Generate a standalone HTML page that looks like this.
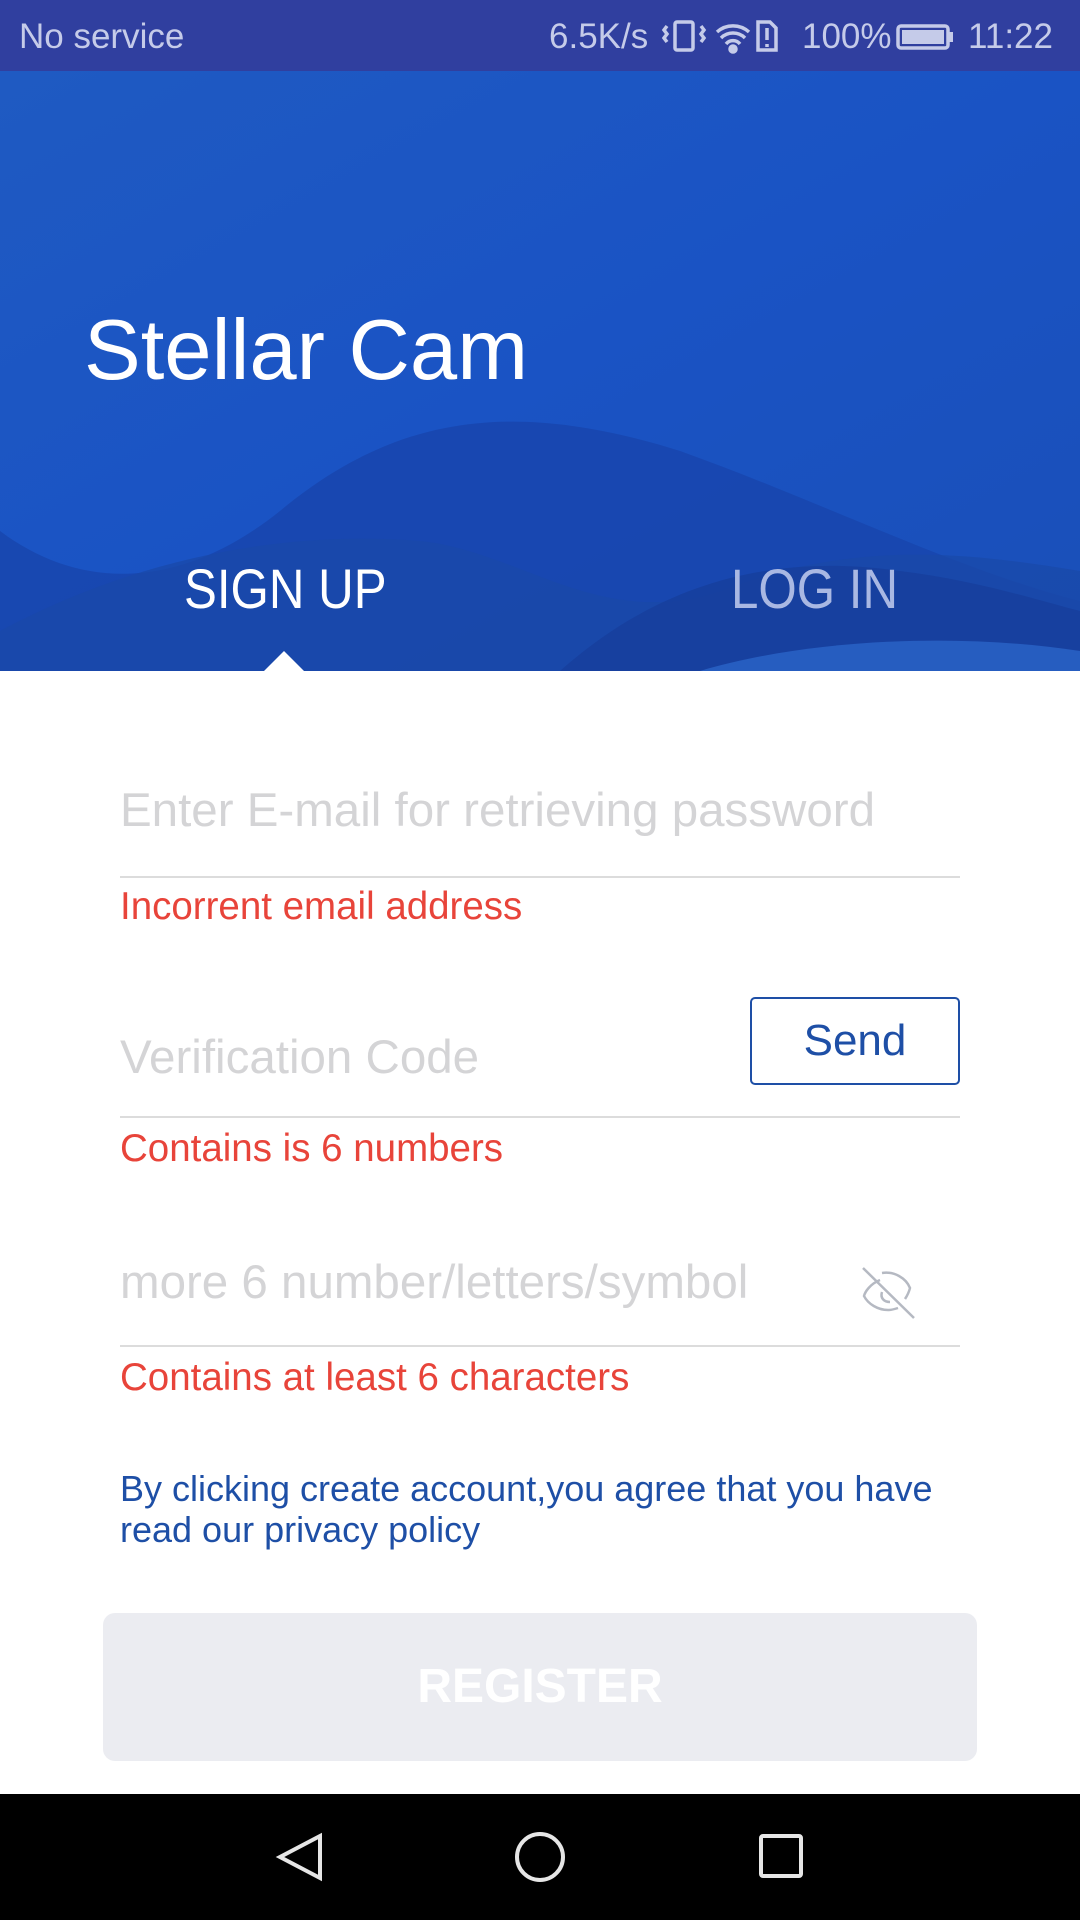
<!DOCTYPE html>
<html><head><meta charset="utf-8"><style>
body{margin:0;width:1080px;height:1920px;position:relative;overflow:hidden;background:#fff;font-family:"Liberation Sans",sans-serif}
.a{position:absolute;white-space:nowrap}
.ph{color:#d4d4d6;font-size:47.5px}
.err{color:#e8443a;font-size:38.5px}
.line{position:absolute;left:120px;width:840px;height:2px;background:#dcdcdc}
</style></head><body>
<div class="a" style="left:0;top:0;width:1080px;height:71px;background:#303f9f"></div>
<div class="a" style="left:19px;top:17px;color:#c5cbe9;font-size:35px">No service</div>
<div class="a" style="left:549px;top:17px;color:#c5cbe9;font-size:35px">6.5K/s</div>
<svg class="a" style="left:660px;top:18px" width="420" height="40" viewBox="0 0 420 40" fill="none" stroke="#c5cbe9" stroke-width="3.5">
<rect x="15" y="4" width="18" height="28" rx="2"/><path d="M7 8l-3 4 3 4-3 4 3 4M41 8l3 4-3 4 3 4-3 4"/>
<path d="M57 14a24 24 0 0 1 32 0M61 20a17 17 0 0 1 24 0M66 26a9 9 0 0 1 14 0"/><circle cx="73" cy="31" r="3" fill="#c5cbe9"/>
<path d="M98 4h12l6 6v22h-18z"/><path d="M107 10v12M107 26v3"/>
<rect x="238" y="8" width="50" height="22" rx="3"/><rect x="242" y="12" width="42" height="14" fill="#c5cbe9" stroke="none"/><rect x="289" y="14" width="4" height="10" fill="#c5cbe9" stroke="none"/>
</svg>
<div class="a" style="left:802px;top:17px;color:#c5cbe9;font-size:35px">100%</div>
<div class="a" style="left:968px;top:17px;color:#c5cbe9;font-size:35px">11:22</div>
<svg class="a" style="left:0;top:71px" width="1080" height="600" viewBox="0 0 1080 600">
<defs><linearGradient id="g" x1="0" y1="0" x2="1" y2="1"><stop offset="0" stop-color="#1f5ac2"/><stop offset="0.5" stop-color="#1a53c4"/><stop offset="1" stop-color="#1a4fb8"/></linearGradient></defs>
<rect width="1080" height="600" fill="url(#g)"/>
<path d="M0 460C80 520 180 520 280 440C400 340 520 330 680 380C820 430 960 500 1080 530V600H0Z" fill="#1845ad" opacity="0.8"/>
<path d="M0 560C150 480 300 460 420 470C520 480 600 560 720 520C850 470 960 480 1080 500V600H0Z" fill="#1a49a8" opacity="0.7"/>
<path d="M560 600C650 520 760 480 900 500C980 510 1040 530 1080 540V600Z" fill="#163f9c" opacity="0.8"/>
<path d="M700 600C800 570 950 560 1080 580V600Z" fill="#2a64c8" opacity="0.8"/>
<path d="M264 600L284 580L304 600Z" fill="#fff"/>
</svg>
<div class="a" style="left:84px;top:302px;color:#fff;font-size:85px">Stellar Cam</div>
<div class="a" style="left:184px;top:556px;color:#fff;font-size:56px;transform:scaleX(0.88);transform-origin:left">SIGN UP</div>
<div class="a" style="left:731px;top:556px;color:#a9b8e3;font-size:56px;transform:scaleX(0.88);transform-origin:left">LOG IN</div>

<div class="a ph" style="left:120px;top:783px">Enter E-mail for retrieving password</div>
<div class="line" style="top:876px"></div>
<div class="a err" style="left:120px;top:885px">Incorrent email address</div>

<div class="a ph" style="left:120px;top:1030px">Verification Code</div>
<div class="a" style="left:750px;top:997px;width:206px;height:84px;border:2.5px solid #1e4fa6;border-radius:5px;color:#1e4fa6;font-size:44px;text-align:center;line-height:84px">Send</div>
<div class="line" style="top:1116px"></div>
<div class="a err" style="left:120px;top:1127px">Contains is 6 numbers</div>

<div class="a ph" style="left:120px;top:1255px">more 6 number/letters/symbol</div>
<svg class="a" style="left:860px;top:1266px" width="56" height="56" viewBox="0 0 56 56" fill="none" stroke="#b5b9c2" stroke-width="2.5">
<path d="M3 2L54 52"/><path d="M20 14C10 18 5 26 4 30C8 38 18 44 28 44C32 44 35 43 38 42"/><path d="M22 7C34 5 46 12 50 22C49 26 47 30 45 33"/><path d="M22 26C20 32 24 36 30 36"/>
</svg>
<div class="line" style="top:1345px"></div>
<div class="a err" style="left:120px;top:1356px">Contains at least 6 characters</div>

<div class="a" style="left:120px;top:1468px;color:#1e4fa6;font-size:36px;line-height:41px">By clicking create account,you agree that you have<br>read our privacy policy</div>

<div class="a" style="left:103px;top:1613px;width:874px;height:148px;background:#ebecf1;border-radius:12px;color:#fff;font-weight:bold;font-size:48px;text-align:center;line-height:148px">REGISTER</div>

<div class="a" style="left:0;top:1794px;width:1080px;height:126px;background:#000"></div>
<svg class="a" style="left:0;top:1794px" width="1080" height="126" viewBox="0 0 1080 126" fill="none" stroke="#e6e6e6" stroke-width="4">
<path d="M320 42L280 63L320 84Z"/><circle cx="540" cy="63" r="23"/><rect x="761" y="42" width="40" height="40" rx="2"/>
</svg>
</body></html>
